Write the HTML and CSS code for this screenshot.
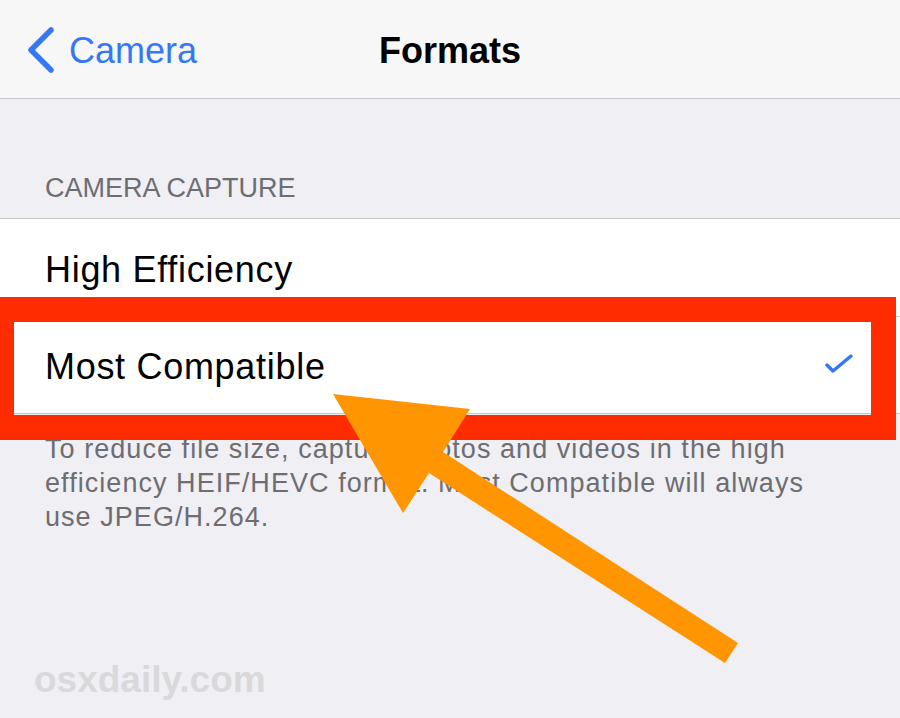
FILE: index.html
```html
<!DOCTYPE html>
<html>
<head>
    <title>Formats</title>
    <link rel="stylesheet" href="styles.css">
</head>
<body>
    <div class="page">
        <div class="navbar">
            <a class="back" href="#">
                <svg class="chevron" width="34" height="48" viewBox="0 0 34 48">
                    <polyline points="25,4 5,24 25,44" fill="none" stroke="#3478f6" stroke-width="5.5" stroke-linecap="round" stroke-linejoin="round"/>
                </svg>
                <span>Camera</span>
            </a>
            <div class="title">Formats</div>
            <div></div>
        </div>

        <div class="section-header">CAMERA CAPTURE</div>

        <div class="list">
            <div class="cell first">High Efficiency</div>
            <div class="cell">
                <span>Most Compatible</span>
                <svg class="check" width="30" height="24" viewBox="0 0 30 24">
                    <polyline points="3,12 9,18 27,3" fill="none" stroke="#3478f6" stroke-width="3.5" stroke-linecap="round" stroke-linejoin="round"/>
                </svg>
            </div>
        </div>

        <div class="footer">
            To reduce file size, capture photos and videos in the high<br>
            efficiency HEIF/HEVC format. Most Compatible will always<br>
            use JPEG/H.264.
        </div>

        <!-- annotation on top of the screenshot -->
        <div class="highlight"></div>
        <svg class="arrow" width="900" height="718" viewBox="0 0 900 718">
            <polygon points="333,394 470,409 443,452 738,643 725,663 429,473 403,513" fill="#ff9500"/>
        </svg>
        <div class="watermark">osxdaily.com</div>
    </div>
</body>
</html>
```

FILE: styles.css
```css
html {
    background-color: #efeff4;
}

body {
    margin: 0;
    font-family: "Liberation Sans", Arial, sans-serif;
    background-color: #efeff4;
}

.page {
    position: relative;
    width: 900px;
    height: 718px;
    overflow: hidden;
}

.navbar {
    display: grid;
    grid-template-columns: 1fr auto 1fr;
    align-items: center;
    height: 99px;
    padding-top: 4px;
    box-sizing: border-box;
    background-color: #f7f7f7;
    border-bottom: 1px solid #c8c7cc;
}

.back {
    display: flex;
    align-items: center;
    gap: 9px;
    padding-left: 26px;
    color: #3478f6;
    font-size: 36px;
    text-decoration: none;
}

.chevron {
    margin-top: -2px;
}

.title {
    font-size: 36px;
    font-weight: bold;
    color: #000;
}

.section-header {
    padding: 73px 45px 14px;
    font-size: 27px;
    line-height: 32px;
    color: #6d6d72;
}

.list {
    background-color: #fff;
    border-top: 1px solid #c8c7cc;
    border-bottom: 1px solid #c8c7cc;
}

.cell {
    display: flex;
    justify-content: space-between;
    align-items: center;
    height: 96px;
    padding: 29px 46px 26px 45px;
    box-sizing: border-box;
    font-size: 36px;
    line-height: 41px;
    letter-spacing: 0.7px;
    color: #000;
}

.cell.first {
    height: 98px;
    padding-top: 30px;
    border-bottom: 1px solid #c8c7cc;
    margin-left: 45px;
    padding-left: 0;
}

.check {
    margin-top: -4px;
}

.footer {
    padding: 18px 45px 0;
    font-size: 27px;
    line-height: 34px;
    letter-spacing: 1.05px;
    color: #6d6d72;
}

.highlight {
    position: absolute;
    left: 0;
    top: 297px;
    width: 896px;
    height: 143px;
    box-sizing: border-box;
    border: 25px solid #fe2c00;
    border-left-width: 14px;
}

.arrow {
    position: absolute;
    left: 0;
    top: 0;
}

.watermark {
    position: absolute;
    left: 34px;
    top: 659px;
    font-size: 37px;
    font-weight: bold;
    color: #d9d9dc;
}
```
